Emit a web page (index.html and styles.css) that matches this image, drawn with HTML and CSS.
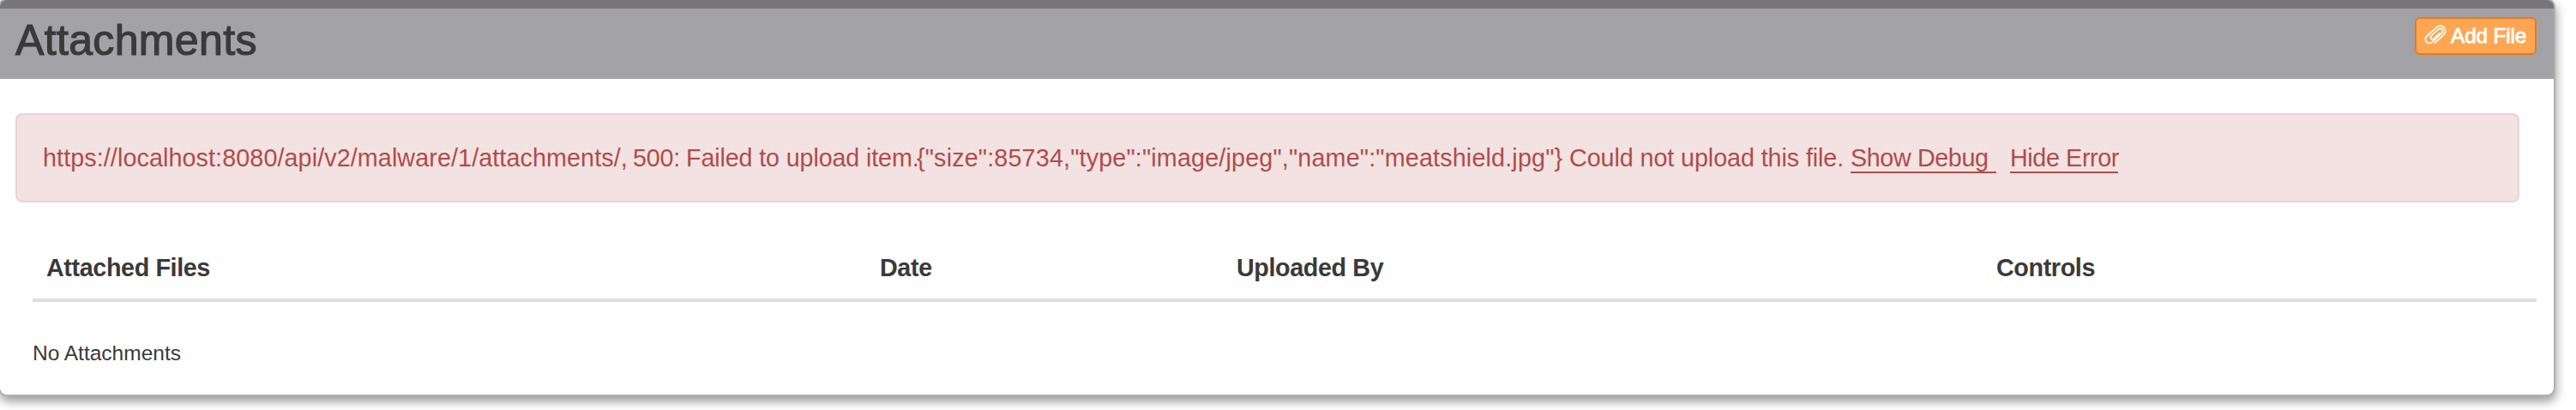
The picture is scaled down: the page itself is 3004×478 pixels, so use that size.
FILE: index.html
```html
<!DOCTYPE html>
<html lang="en">
<head>
<meta charset="utf-8">
<title>Attachments</title>
<link rel="stylesheet" href="styles.css">
</head>
<body>
<section class="panel">
  <header class="panel-header">
    <h2 class="title">Attachments</h2>
    <button class="add-button" type="button">
      <svg class="clip" viewBox="0 0 26 24" fill="none" stroke="#fff" stroke-width="1.7" stroke-linecap="round" stroke-linejoin="round"><path d="M12.500 22L22.800 12.400C28 7 21-1 15 3.400L3.200 14C-1.500 19 4.500 25 9 21.300L20.500 10.500C23.500 7 19.500 4 16.500 6L8.500 13.500C6 16.500 9 19 11.500 17L18 10.500"/></svg>
      <span class="add-label">Add File</span>
    </button>
  </header>
  <div class="alert">
    <span class="url">https://localhost:8080/api/v2/malware/1/attachments/,</span>
    <span class="status">500:</span>
    <span class="reason">Failed to upload item.</span>
    <span class="payload">{"size":85734,"type":"image/jpeg","name":"meatshield.jpg"}</span>
    <span class="summary">Could not upload this file.</span>
    <a class="link debug">Show Debug</a>
    <a class="link hide">Hide Error</a>
  </div>
  <div class="table">
    <div class="columns">
      <span>Attached Files</span>
      <span>Date</span>
      <span>Uploaded By</span>
      <span>Controls</span>
    </div>
    <p class="empty">No Attachments</p>
  </div>
</section>
</body>
</html>
```
FILE: styles.css
```css
* { box-sizing: border-box; }
html, body { margin: 0; height: 478px; overflow: hidden; }
body { background: #fff; color: #3a3a3a; font-family: "Liberation Sans", Arial, sans-serif; }
.panel {
  width: 2982px;
  height: 464px;
  margin: -2px 0 0 -2px;
  border: 2px solid #b0b0b0;
  border-radius: 10px;
  background: #fefefe;
  box-shadow: 1px 6px 12px rgba(0, 0, 0, .4);
  overflow: hidden;
}
.panel-header {
  height: 92px;
  border-top: 10px solid #77757a;
  background: #a3a2a7;
  display: flex;
  justify-content: space-between;
  align-items: flex-start;
  padding: 10px 20px 0 18px;
}
.title {
  margin: -1px 0 0;
  font-size: 50px;
  line-height: 56px;
  font-weight: 400;
  letter-spacing: .35px;
  -webkit-text-stroke: 1.2px #3a3a3a;
}
.add-button {
  width: 142px;
  height: 44px;
  border: 2px solid #e67a1e;
  border-radius: 6px;
  background: #ffa652;
  color: #fff;
  padding: 0 0 0 9px;
  display: flex;
  align-items: flex-start;
  gap: 5px;
  font-family: inherit;
}
.clip { width: 26px; height: 24px; margin-top: 6px; flex: none; }
.add-label {
  font-size: 24.5px;
  line-height: 40px;
  letter-spacing: -.2px;
  white-space: nowrap;
  -webkit-text-stroke: .8px #fff;
}
.alert {
  width: 2920px;
  height: 104px;
  margin: 40px 0 0 18px;
  padding: 34px 0 0 30px;
  border: 2px solid #edd1d7;
  border-radius: 8px;
  background: #f2e2e1;
  color: #b04c4b;
  display: flex;
  align-items: flex-start;
  font-size: 28.75px;
  line-height: 32px;
  white-space: nowrap;
}
.url { width: 688px; letter-spacing: .08px; }
.status { width: 62px; letter-spacing: -.2px; }
.reason { width: 269px; letter-spacing: -.15px; }
.payload { width: 761px; letter-spacing: .15px; }
.summary { width: 328px; letter-spacing: -.1px; }
.link {
  margin-top: 2px;
  height: 32px;
  line-height: 28px;
  border-bottom: 2px solid #b04c4b;
  letter-spacing: -.4px;
}
.debug { width: 170px; }
.hide { width: 126px; margin-left: 16px; }
.table { margin: 48px 20px 0 38px; }
.columns {
  height: 68px;
  padding: 12px 0 0 16px;
  border-bottom: 4px solid #dfdfdf;
  display: grid;
  grid-template-columns: 972px 416px 886px 1fr;
  font-size: 28.75px;
  line-height: 32px;
  letter-spacing: -.4px;
  font-weight: 700;
}
.empty { margin: 46px 0 0; font-size: 24.5px; line-height: 27px; }
```
